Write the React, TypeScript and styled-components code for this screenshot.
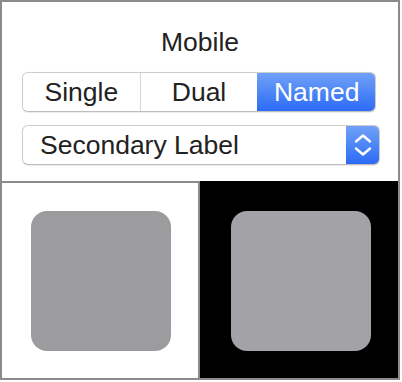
import React, { useState } from "react";
import styled, { createGlobalStyle } from "styled-components";

const GlobalStyle = createGlobalStyle`
  html, body {
    margin: 0;
    padding: 0;
    background: #ffffff;
  }
  body {
    font-family: "Liberation Sans", Arial, sans-serif;
  }
`;

const Frame = styled.div`
  width: 400px;
  height: 380px;
  box-sizing: border-box;
  border: 2px solid #8b8b8b;
  display: flex;
  flex-direction: column;
  background: #ffffff;
`;

const Controls = styled.div`
  height: 179px;
  box-sizing: border-box;
  padding: 25px 0 0 20px;
  display: flex;
  flex-direction: column;
`;

const Title = styled.div`
  width: 356px;
  height: 30px;
  line-height: 30px;
  font-size: 26.5px;
  color: #222222;
  text-align: center;
  margin-bottom: 15px;
`;

const Segmented = styled.div`
  width: 354px;
  height: 40px;
  box-sizing: border-box;
  display: flex;
  border: 1px solid #cdcdcd;
  border-bottom-color: #bdbdbd;
  border-radius: 6px;
  overflow: hidden;
  background: #ffffff;
  box-shadow: 0 0.5px 1px rgba(0, 0, 0, 0.08);
`;

const Segment = styled.button<{ $active: boolean }>`
  flex: 1;
  border: none;
  margin: 0;
  padding: 0;
  font-family: inherit;
  font-size: 26.5px;
  color: ${(p) => (p.$active ? "#ffffff" : "#222222")};
  background: ${(p) =>
    p.$active ? "linear-gradient(#70a1f8, #2c6bf4)" : "#ffffff"};
  border-left: 1px solid #d6d6d6;
  cursor: pointer;

  &:first-child {
    border-left: none;
  }
  ${(p) => p.$active && "border-left-color: transparent;"}
`;

const Popup = styled.div`
  width: 358px;
  height: 40px;
  margin-top: 13px;
  box-sizing: border-box;
  display: flex;
  align-items: stretch;
  border: 1px solid #cdcdcd;
  border-bottom-color: #bdbdbd;
  border-radius: 6px;
  overflow: hidden;
  background: #ffffff;
  box-shadow: 0 0.5px 1px rgba(0, 0, 0, 0.08);
`;

const PopupLabel = styled.div`
  flex: 1;
  padding-left: 17px;
  font-size: 26.5px;
  line-height: 38px;
  color: #222222;
`;

const PopupArrows = styled.div`
  width: 33px;
  background: linear-gradient(#70a1f8, #2c6bf4);
  display: flex;
  align-items: center;
  justify-content: center;
`;

const Previews = styled.div`
  flex: 1;
  display: grid;
  grid-template-columns: 198px 198px;
`;

const Preview = styled.div<{ $dark: boolean }>`
  box-sizing: border-box;
  display: flex;
  align-items: center;
  justify-content: center;
  background: ${(p) => (p.$dark ? "#000000" : "#ffffff")};
  border-top: 2px solid ${(p) => (p.$dark ? "#000000" : "#8b8b8b")};
  border-right: ${(p) => (p.$dark ? "none" : "2px solid #8b8b8b")};
  padding: ${(p) => (p.$dark ? "1px 0 0 4px" : "0 0 0 2px")};
`;

const Swatch = styled.div<{ $color: string }>`
  width: 140px;
  height: 140px;
  border-radius: 16px;
  background: ${(p) => p.$color};
`;

const modes = ["Single", "Dual", "Named"];

export default function App() {
  const [mode, setMode] = useState("Named");

  return (
    <>
      <GlobalStyle />
      <Frame>
        <Controls>
          <Title>Mobile</Title>
          <Segmented>
            {modes.map((m) => (
              <Segment key={m} $active={m === mode} onClick={() => setMode(m)}>
                {m}
              </Segment>
            ))}
          </Segmented>
          <Popup>
            <PopupLabel>Secondary Label</PopupLabel>
            <PopupArrows>
              <svg width="18" height="24" viewBox="0 0 18 24" fill="none">
                <path
                  d="M2 8.5 L9 2.5 L16 8.5"
                  stroke="#ffffff"
                  strokeWidth="2.4"
                  strokeLinecap="round"
                  strokeLinejoin="round"
                />
                <path
                  d="M2 15.5 L9 21.5 L16 15.5"
                  stroke="#ffffff"
                  strokeWidth="2.4"
                  strokeLinecap="round"
                  strokeLinejoin="round"
                />
              </svg>
            </PopupArrows>
          </Popup>
        </Controls>
        <Previews>
          <Preview $dark={false}>
            <Swatch $color="#9c9c9e" />
          </Preview>
          <Preview $dark={true}>
            <Swatch $color="#a3a2a7" />
          </Preview>
        </Previews>
      </Frame>
    </>
  );
}
